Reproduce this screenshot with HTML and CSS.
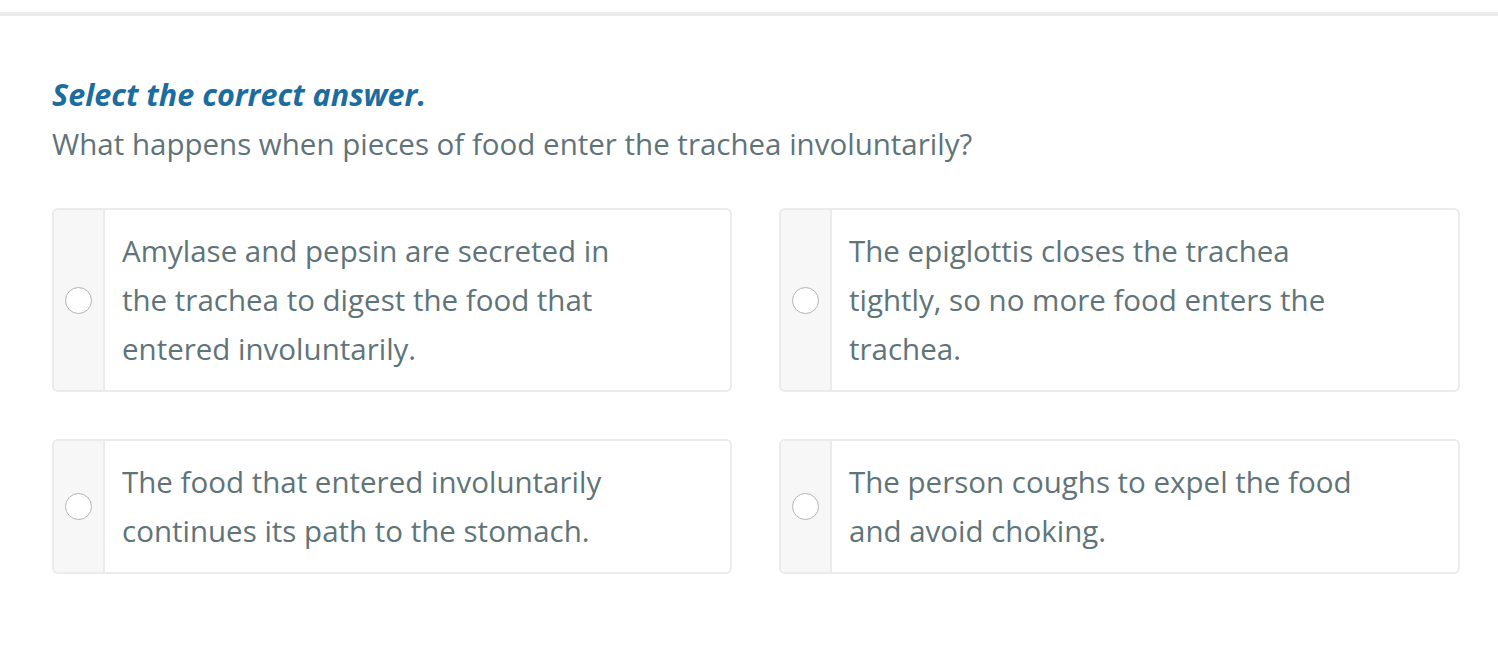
FILE: index.html
```html
<!DOCTYPE html>
<html lang="en">
<head>
<meta charset="utf-8">
<title>Question</title>
<link rel="stylesheet" href="styles.css">
</head>
<body>
<div class="topbar"></div>
<main class="content">
  <h1 class="instruction">Select the correct answer.</h1>
  <p class="question">What happens when pieces of food enter the trachea involuntarily?</p>
  <div class="answers">
    <label class="card">
      <span class="radio-col"><span class="radio"></span></span>
      <span class="answer-text">Amylase and pepsin are secreted in<br>the trachea to digest the food that<br>entered involuntarily.</span>
    </label>
    <label class="card">
      <span class="radio-col"><span class="radio"></span></span>
      <span class="answer-text">The epiglottis closes the trachea<br>tightly, so no more food enters the<br>trachea.</span>
    </label>
    <label class="card">
      <span class="radio-col"><span class="radio"></span></span>
      <span class="answer-text">The food that entered involuntarily<br>continues its path to the stomach.</span>
    </label>
    <label class="card">
      <span class="radio-col"><span class="radio"></span></span>
      <span class="answer-text">The person coughs to expel the food<br>and avoid choking.</span>
    </label>
  </div>
</main>
</body>
</html>
```

FILE: styles.css
```css
html, body {
  margin: 0;
  padding: 0;
  background: #ffffff;
}
body {
  font-family: "Open Sans", "Noto Sans", "Liberation Sans", sans-serif;
  color: #5f7479;
}
.topbar {
  height: 4px;
  margin-top: 12px;
  background: #ebebeb;
}
.content {
  padding: 0 38px 0 52px;
}
.instruction {
  margin: 58px 0 0 0;
  font-size: 30.5px;
  line-height: 40px;
  font-weight: 700;
  font-style: italic;
  color: #1b6c9f;
}
.question {
  margin: 10px 0 0 0;
  font-size: 29.5px;
  line-height: 40px;
  color: #5f7479;
}
.answers {
  display: grid;
  grid-template-columns: 680px 681px;
  column-gap: 47px;
  row-gap: 47px;
  margin-top: 44px;
}
.card {
  display: flex;
  border: 2px solid #ebebeb;
  border-radius: 6px;
  overflow: hidden;
  background: #ffffff;
}
.radio-col {
  width: 49px;
  flex: none;
  display: flex;
  align-items: center;
  justify-content: center;
  background: #f7f7f7;
  border-right: 2px solid #ebebeb;
}
.radio {
  width: 25px;
  height: 25px;
  border: 1px solid #b3b3b3;
  border-radius: 50%;
  background: #ffffff;
}
.answer-text {
  padding: 16px 16px 17px 17px;
  font-size: 29.5px;
  line-height: 49px;
}
```
